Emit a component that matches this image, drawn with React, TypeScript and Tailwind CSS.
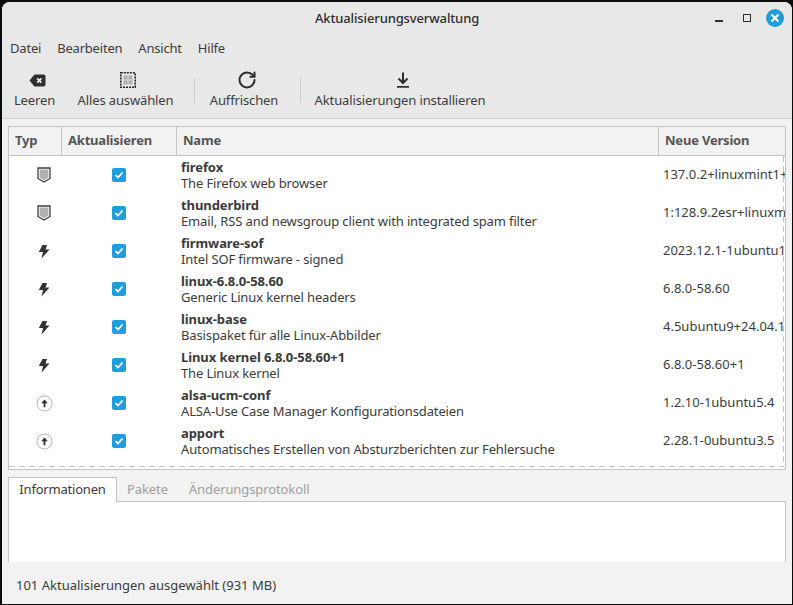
import { RotateCw } from "lucide-react";

const rows = [
    { icon: 'shield', name: 'firefox', desc: 'The Firefox web browser', version: '137.0.2+linuxmint1+victoria' },
    { icon: 'shield', name: 'thunderbird', desc: 'Email, RSS and newsgroup client with integrated spam filter', version: '1:128.9.2esr+linuxmint1+victoria' },
    { icon: 'bolt', name: 'firmware-sof', desc: 'Intel SOF firmware - signed', version: '2023.12.1-1ubuntu1.4' },
    { icon: 'bolt', name: 'linux-6.8.0-58.60', desc: 'Generic Linux kernel headers', version: '6.8.0-58.60' },
    { icon: 'bolt', name: 'linux-base', desc: 'Basispaket für alle Linux-Abbilder', version: '4.5ubuntu9+24.04.1' },
    { icon: 'bolt', name: 'Linux kernel 6.8.0-58.60+1', desc: 'The Linux kernel', version: '6.8.0-58.60+1' },
    { icon: 'up', name: 'alsa-ucm-conf', desc: 'ALSA-Use Case Manager Konfigurationsdateien', version: '1.2.10-1ubuntu5.4' },
    { icon: 'up', name: 'apport', desc: 'Automatisches Erstellen von Absturzberichten zur Fehlersuche', version: '2.28.1-0ubuntu3.5' },
]

const TypeIcon = ({ icon }: { icon: string }) => {
    if (icon === 'shield') {
        return (
            <svg width="14" height="16" viewBox="0 0 14 16">
                <path d="M1 1h12v10.500L7 15 1 11.500z" fill="#ffffff" stroke="#3f3f3f" strokeWidth="1.300" />
                <path d="M2.600 2.600h8.800v8.100L7 13.300 2.600 10.700z" fill="#b0b0b0" />
            </svg>
        )
    }
    if (icon === 'bolt') {
        return (
            <svg width="12" height="15" viewBox="0 0 12 15">
                <path d="M4.500 1h4.500L7.500 5.500H11.500L3.500 14.500l1.500-6.500H0.800z" fill="#333333" />
            </svg>
        )
    }
    return (
        <svg width="17" height="17" viewBox="0 0 17 17">
            <circle cx="8.500" cy="8.500" r="7.500" fill="#ffffff" stroke="#a8a8a8" strokeWidth="0.900" />
            <path d="M8.500 4.500L11.800 8.200H9.400v4h-1.800v-4H5.200z" fill="#2e2e2e" />
        </svg>
    )
}

const Check = () => (
    <div className="w-[14px] h-[14px] rounded-[2px] bg-[#1f9ede] flex items-center justify-center">
        <svg width="10" height="10" viewBox="0 0 10 10">
            <path d="M1.500 5.200L4 7.500 8.500 2.500" fill="none" stroke="#ffffff" strokeWidth="1.800" />
        </svg>
    </div>
)

const ToolButton = ({ label, icon, className }: { label: string, icon: React.ReactNode, className: string }) => (
    <div className={`flex flex-col items-center shrink-0 ${className}`}>
        <div className="h-[18px] flex items-center justify-center">{icon}</div>
        <span className="mt-[2px] leading-[18px] whitespace-nowrap">{label}</span>
    </div>
)

const App = () => {
    return (
        <div className="w-[793px] h-[605px] bg-[#0c0c0c] pl-[2px] pt-[2px] pr-[1px] pb-[1px] overflow-hidden text-[13px] tracking-[-0.13px] text-[#3c3c3c] font-['Noto_Sans','Open_Sans',sans-serif]">
            <div className="w-full h-full flex flex-col rounded-t-[8px] overflow-hidden bg-[#f2f2f2]">

                <div className="bg-[#e8e8e8] border-b border-[#cfcfcf] h-[117px] shrink-0 flex flex-col">
                    <div className="h-[33px] shrink-0 relative flex items-center justify-center">
                        <span className="text-[#2e2e2e] font-medium">Aktualisierungsverwaltung</span>
                        <div className="absolute right-[8px] top-[7px] flex items-center gap-[20px]">
                            <div className="w-[8px] h-[2px] bg-[#2e2e2e] mt-[6px]" />
                            <div className="w-[8px] h-[8px] border border-[#2e2e2e]" />
                            <div className="w-[18px] h-[18px] rounded-full bg-[#1f9ede] flex items-center justify-center -ml-[5px]">
                                <svg width="10" height="10" viewBox="0 0 10 10">
                                    <path d="M1.500 1.500L8.500 8.500M8.500 1.500L1.500 8.500" stroke="#ffffff" strokeWidth="2" />
                                </svg>
                            </div>
                        </div>
                    </div>

                    <div className="flex gap-[16px] pl-[8px] h-[27px] pt-[1px] shrink-0 items-center tracking-[-0.2px]">
                        <span>Datei</span>
                        <span>Bearbeiten</span>
                        <span>Ansicht</span>
                        <span>Hilfe</span>
                    </div>

                    <div className="flex items-start pl-[12px] pt-[9px]">
                        <ToolButton
                            label="Leeren"
                            className="w-[41px]"
                            icon={
                                <svg className="ml-[5px]" width="17" height="13" viewBox="0 0 17 13">
                                    <path d="M6 0.500H14.500a2 2 0 0 1 2 2v8a2 2 0 0 1-2 2H6a1.500 1.500 0 0 1-1-0.500L0.500 6.500 5 1a1.500 1.500 0 0 1 1-0.500z" fill="#2e2e2e" />
                                    <path d="M8.200 4.300L12.400 8.700M12.400 4.300L8.200 8.700" stroke="#e8e8e8" strokeWidth="1.900" />
                                </svg>
                            }
                        />
                        <ToolButton
                            label="Alles auswählen"
                            className="ml-[23px] w-[95px]"
                            icon={
                                <svg className="ml-[5px]" width="16" height="16" viewBox="0 0 16 16">
                                    <rect x="0.800" y="0.800" width="14.400" height="14.400" fill="none" stroke="#222222" strokeWidth="1.600" strokeDasharray="2 1" />
                                    <rect x="3.500" y="3.500" width="9" height="9" fill="#b0b0b0" />
                                    <path d="M3.500 8h9M8 3.500v9" stroke="#d6d6d6" strokeWidth="1" />
                                </svg>
                            }
                        />
                        <div className="w-px h-[25px] bg-[#cccccc] ml-[21px] mt-[7px]" />
                        <ToolButton
                            label="Auffrischen"
                            className="ml-[14px] w-[70px]"
                            icon={<RotateCw className="ml-[6px]" size={20} strokeWidth={2.400} color="#2e2e2e" />}
                        />
                        <div className="w-px h-[25px] bg-[#cccccc] ml-[21px] mt-[7px]" />
                        <ToolButton
                            label="Aktualisierungen installieren"
                            className="ml-[14px] w-[170px]"
                            icon={
                                <svg className="ml-[6px]" width="14" height="16" viewBox="0 0 14 16">
                                    <path d="M7 0.500v10M2.500 6.500L7 11 11.500 6.500" fill="none" stroke="#2e2e2e" strokeWidth="2" />
                                    <path d="M1 14.800h12" stroke="#2e2e2e" strokeWidth="1.800" />
                                </svg>
                            }
                        />
                    </div>
                </div>

                <div className="mx-[6px] mt-[7px] h-[344px] shrink-0 border border-[#c4c4c4] bg-white flex flex-col relative overflow-hidden">
                    <div className="grid grid-cols-[53px_115px_482px_1fr] h-[29px] shrink-0 bg-[#f2f2f2] border-b border-[#c4c4c4] font-bold text-[#555555] tracking-[-0.2px]">
                        <div className="border-r border-[#c4c4c4] pl-[6px] flex items-center">Typ</div>
                        <div className="border-r border-[#c4c4c4] pl-[6px] flex items-center">Aktualisieren</div>
                        <div className="border-r border-[#c4c4c4] pl-[6px] flex items-center">Name</div>
                        <div className="pl-[6px] flex items-center">Neue Version</div>
                    </div>
                    {rows.map((row) => {
                        return (
                            <div key={row.name} className="grid grid-cols-[53px_115px_482px_1fr] h-[38px] shrink-0 items-center">
                                <div className="flex justify-center pl-[17px] w-[53px]">
                                    <TypeIcon icon={row.icon} />
                                </div>
                                <div className="flex justify-center pr-[2px]">
                                    <Check />
                                </div>
                                <div className="pl-[4px] leading-[16px] whitespace-nowrap">
                                    <b className="block font-bold text-[#3a3a3a] tracking-[-0.08px]">{row.name}</b>
                                    <p>{row.desc}</p>
                                </div>
                                <div className="pl-[4px] whitespace-nowrap overflow-hidden tracking-[0px]">{row.version}</div>
                            </div>
                        )
                    })}
                    {/* dashed edges of the scrolled area */}
                    <div className="absolute top-[29px] bottom-[2px] right-[1px] w-px bg-[repeating-linear-gradient(180deg,#c4c4c4_0_6px,transparent_6px_10px)]" />
                    <div className="absolute left-0 right-[1px] bottom-[2px] h-px bg-[repeating-linear-gradient(90deg,#c4c4c4_0_6px,transparent_6px_10px)]" />
                </div>

                <div className="flex flex-col mx-[6px] mt-[7px] shrink-0">
                    <div className="flex h-[25px] shrink-0 relative tracking-[-0.1px]">
                        <div className="w-[109px] h-[25px] border border-b-0 border-[#c4c4c4] bg-white flex items-center justify-center relative z-10 tracking-[-0.2px]">Informationen</div>
                        <div className="pl-[10px] flex items-center text-[#a0a0a0]">Pakete</div>
                        <div className="pl-[21px] flex items-center text-[#a0a0a0]">Änderungsprotokoll</div>
                        <div className="absolute left-0 right-0 bottom-0 h-px bg-[#c4c4c4]" />
                    </div>
                    <div className="h-[60px] shrink-0 bg-white border-l border-r border-[#c4c4c4]" />
                </div>

                <div className="flex-1 flex items-center pl-[14px] pt-[6px] tracking-[0px]">
                    101 Aktualisierungen ausgewählt (931 MB)
                </div>
            </div>
        </div>
    )
}

export default App
